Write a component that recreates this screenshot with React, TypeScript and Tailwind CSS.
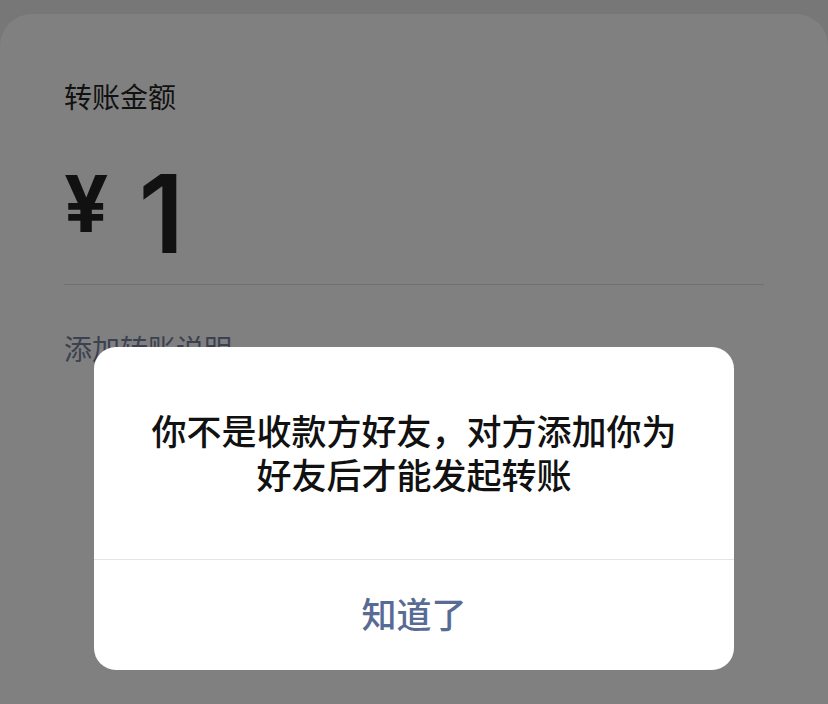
export default function App() {
  return (
    <div
      className="relative flex h-[704px] w-[828px] flex-col overflow-hidden bg-[#777777] pt-[14px]"
      style={{ fontFamily: '"Noto Sans", "Noto Sans CJK SC", sans-serif' }}
    >
      {/* transfer sheet (shown already dimmed by the mask) */}
      <div className="flex-1 rounded-t-[32px] bg-[#808080] px-[64px] pt-[63px]">
        <div className="text-[28px] leading-[40px] text-[#111111]">转账金额</div>
        <div className="mt-[43px] flex items-start">
          <span className="mt-[5px] font-['Inter'] text-[78px] font-bold leading-none text-[#111111]">¥</span>
          <span className="ml-[30px] font-['Inter'] text-[108px] font-semibold leading-none text-[#111111]">1</span>
        </div>
        <div className="mt-[16px] h-px bg-[#707070]" />
        <div className="mt-[44px] text-[28px] leading-[40px] text-[#3b4150]">添加转账说明</div>
      </div>

      {/* dialog */}
      <div className="absolute inset-x-0 top-[347px] flex justify-center">
        <div className="h-[323px] w-[640px] overflow-hidden rounded-[22px] bg-white">
          <div className="flex h-[212px] flex-col items-center justify-center pt-[2px] text-center text-[35px] font-medium leading-[44px] text-[#111111]">
            <p>你不是收款方好友，对方添加你为</p>
            <p>好友后才能发起转账</p>
          </div>
          <div className="h-px bg-[#e5e5e5]" />
          <button className="flex h-[110px] w-full items-center justify-center text-[35px] font-medium text-[#576b95]">
            知道了
          </button>
        </div>
      </div>
    </div>
  );
}
